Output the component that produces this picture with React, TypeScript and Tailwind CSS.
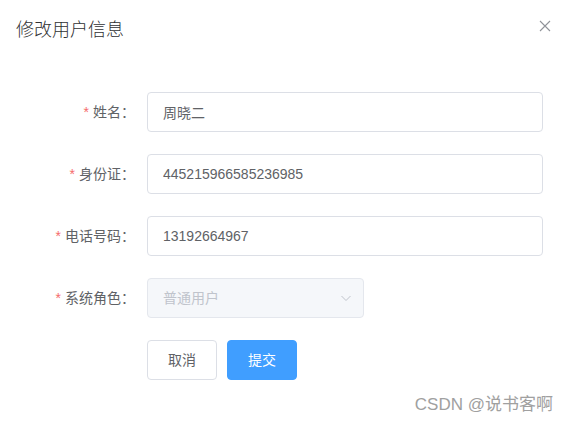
const font = { fontFamily: '"Liberation Sans", "Noto Sans CJK SC", sans-serif' };

function FormRow({ label, children }: { label: string; children: React.ReactNode }) {
  return (
    <div className="flex items-center h-10 mb-[22px]">
      <label className="w-[147px] pr-3 text-right text-sm text-[#606266] leading-10">
        <span className="text-[#f56c6c] mr-1">*</span>
        {label}
      </label>
      {children}
    </div>
  );
}

function App() {
  const rows = [
    { label: "姓名：", value: "周晓二" },
    { label: "身份证：", value: "445215966585236985" },
    { label: "电话号码：", value: "13192664967" },
  ];

  return (
    <div className="relative w-[568px] h-[424px] bg-white overflow-hidden" style={font}>
      <div className="flex items-center justify-between pt-[18px] pl-4 pr-[17px]">
        <span className="text-[18px] leading-6 text-[#303133] font-light">修改用户信息</span>
        <button className="text-[#909399] -mt-2">
          <svg width="12" height="12" viewBox="0 0 12 12" fill="none" stroke="currentColor" strokeWidth="1.1">
            <path d="M1 1 L11 11 M11 1 L1 11" />
          </svg>
        </button>
      </div>

      <div className="mt-[50px]">
        {rows.map((r) => (
          <FormRow key={r.label} label={r.label}>
            <input
              readOnly
              value={r.value}
              className="w-[396px] h-10 px-[15px] text-sm text-[#606266] border border-[#dcdfe6] rounded bg-white outline-none"
            />
          </FormRow>
        ))}
        <FormRow label="系统角色：">
          <div className="w-[217px] h-10 flex items-center justify-between pl-[15px] pr-[11px] text-sm text-[#c0c4cc] border border-[#e4e7ed] rounded bg-[#f5f7fa]">
            <span>普通用户</span>
            <svg width="12" height="12" viewBox="0 0 12 12" fill="none" stroke="#c0c4cc" strokeWidth="1">
              <path d="M1.5 4 L6 8.5 L10.5 4" />
            </svg>
          </div>
        </FormRow>
        <div className="flex pl-[147px] gap-[10px]">
          <button className="w-[70px] h-10 text-sm text-[#606266] border border-[#dcdfe6] rounded bg-white">
            取消
          </button>
          <button className="w-[70px] h-10 text-sm text-white border border-[#409eff] rounded bg-[#409eff]">
            提交
          </button>
        </div>
      </div>

      <div className="absolute right-[15px] bottom-[7px] text-[17px] text-[#a0a0a0]">CSDN @说书客啊</div>
    </div>
  );
}

export default App;
